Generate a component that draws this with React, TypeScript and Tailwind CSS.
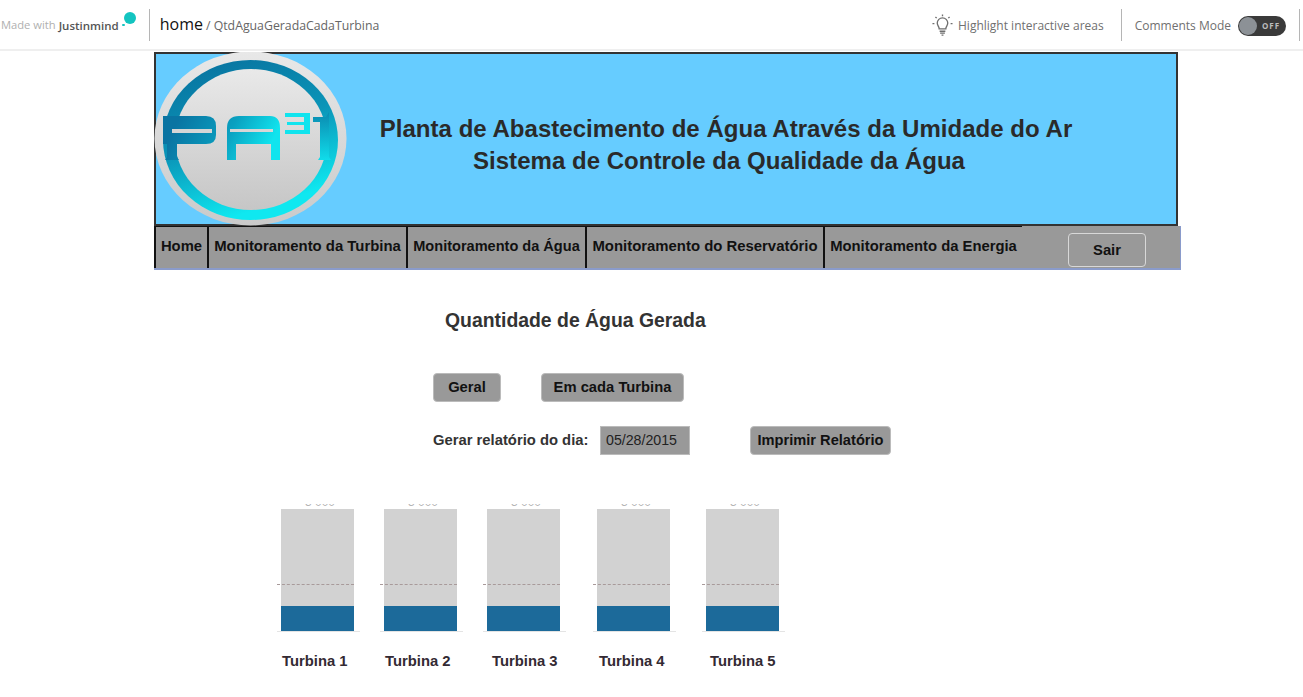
const menu = [
  { label: 'Home', box: 'w-[53px] text-[14.8px]' },
  { label: 'Monitoramento da Turbina', box: 'w-[199px] text-[14.9px]' },
  { label: 'Monitoramento da Água', box: 'w-[179px] text-[14.55px]' },
  { label: 'Monitoramento do Reservatório', box: 'w-[238px] text-[14.9px]' },
  { label: 'Monitoramento da Energia', box: 'w-[199px] text-[14.8px]' },
];

const turbines = [
  { label: 'Turbina 1', gap: 'ml-0', labelShift: 'ml-[1px]' },
  { label: 'Turbina 2', gap: 'ml-[30px]', labelShift: 'ml-[1px]' },
  { label: 'Turbina 3', gap: 'ml-[30px]', labelShift: 'ml-[5px]' },
  { label: 'Turbina 4', gap: 'ml-[37px]', labelShift: 'ml-[2px]' },
  { label: 'Turbina 5', gap: 'ml-[36px]', labelShift: 'ml-[4px]' },
];

function Logo() {
  return (
    <svg width="194" height="174" viewBox="154 52 194 174" className="shrink-0 -ml-[2px]">
      <defs>
        <linearGradient id="rim" x1="0" y1="0" x2="0" y2="1">
          <stop offset="0" stopColor="#e8e8e8" />
          <stop offset="1" stopColor="#cacaca" />
        </linearGradient>
        <linearGradient id="ring" x1="0" y1="0" x2="0.35" y2="1">
          <stop offset="0" stopColor="#086e9c" />
          <stop offset="0.55" stopColor="#0a95b8" />
          <stop offset="1" stopColor="#0fe8f0" />
        </linearGradient>
        <linearGradient id="disc" x1="0" y1="0" x2="0" y2="1">
          <stop offset="0" stopColor="#e9e9e9" />
          <stop offset="1" stopColor="#c6c6c6" />
        </linearGradient>
        <linearGradient id="letters" gradientUnits="userSpaceOnUse" x1="180" y1="116" x2="262" y2="160">
          <stop offset="0" stopColor="#0a74a2" />
          <stop offset="0.55" stopColor="#0aa0c0" />
          <stop offset="1" stopColor="#10e4ee" />
        </linearGradient>
        <linearGradient id="one" x1="0" y1="0" x2="0" y2="1">
          <stop offset="0" stopColor="#0a8ab0" />
          <stop offset="1" stopColor="#10dcea" />
        </linearGradient>
      </defs>
      <ellipse cx="250.5" cy="138.5" rx="96" ry="87" fill="url(#rim)" />
      <ellipse cx="250.5" cy="140" rx="87.5" ry="80" fill="url(#ring)" />
      <ellipse cx="251" cy="139.5" rx="76" ry="70.5" fill="url(#disc)" />
      <path d="M163 116H206Q216 116 216 126V135Q216 144 206 144H177V157L179 160H165L167 157V144H163Z" fill="url(#letters)" />
      <rect x="172" y="129" width="40" height="4" fill="#d6d6d6" />
      <path d="M227 160V128Q227 116 239 116H270Q280 116 280 128V160H271V144H236V160Z" fill="url(#letters)" />
      <rect x="230" y="129" width="43" height="3" fill="#d6d6d6" />
      <path d="M285 113H310V134H285V130H304V125H287V122H304V117H285Z" fill="url(#letters)" />
      <path d="M313 117H326L329 112V157L331 160H318L320 157V122H313Z" fill="url(#one)" />
    </svg>
  );
}

function BulbIcon() {
  return (
    <svg width="21" height="23" viewBox="0 0 22 24" fill="none" stroke="#6f6f6f" strokeWidth="1.4" className="mt-[2px] mr-[5px]">
      <path d="M7.5 15.5C7.5 13 5.5 12.3 5.5 9.5a5.5 5.5 0 0 1 11 0c0 2.8-2 3.5-2 6z" />
      <path d="M8 18h6M8.5 20h5M10 22h2" />
      <path d="M11 0.5v1.7M3.6 3l1.3 1.3M18.4 3l-1.3 1.3M0.5 10h2M19.5 10h2" />
    </svg>
  );
}

function TurbineChart() {
  return (
    <div className="relative w-[73px] h-[123px]">
      <div className="absolute -top-[5px] left-[24px] h-[5px] overflow-hidden text-[12px] leading-[12px] whitespace-nowrap text-[#b5b5b5]">
        <span className="relative -top-[8px]">3 000</span>
      </div>
      <div className="flex flex-col justify-end w-full h-full bg-[#d2d2d2]">
        <div className="h-[26px] bg-[#1c6a9a]" />
      </div>
      <div className="absolute top-[75px] -left-[4px] right-0 border-t border-dashed border-[#a89a9a]" />
      <div className="absolute bottom-0 -left-[4px] -right-[6px] h-px bg-[#e4e4e4]" />
    </div>
  );
}

export default function App() {
  return (
    <div className="min-h-[697px] bg-white overflow-hidden font-['Liberation_Sans',Arial,sans-serif]">
      <header className="h-[51px] flex items-center border-b-2 border-[#efefef] font-['Open_Sans',sans-serif]">
        <span className="ml-[1px] mt-[2px] text-[11.2px] text-[#b0b0b0]">Made with</span>
        <span className="ml-[3px] mt-[2px] text-[11.5px] font-semibold text-[#555]">Justinmind</span>
        <div className="relative w-[20px] h-[30px]">
          <span className="absolute top-[2px] left-[5px] w-[12px] h-[12px] rounded-full bg-[#13c4c0]" />
          <span className="absolute top-[14px] left-[3px] w-[3px] h-[2px] rounded-full bg-[#13c4c0]" />
        </div>
        <div className="ml-[10px] w-px h-[32px] bg-[#b5b5b5]" />
        <span className="ml-[10px] -mt-[2px] text-[16px] text-[#111]">home</span>
        <span className="ml-[3px] mt-[4px] text-[12.3px] text-[#666]">/ QtdAguaGeradaCadaTurbina</span>
        <div className="ml-auto flex items-center">
          <BulbIcon />
          <span className="mt-[2px] text-[12px] text-[#707070]">Highlight interactive areas</span>
          <div className="ml-[17px] w-px h-[32px] bg-[#b5b5b5]" />
          <span className="ml-[13px] mt-[2px] text-[12px] text-[#707070]">Comments Mode</span>
          <div className="ml-[7px] mt-[2px] flex items-center w-[48px] h-[20px] rounded-full bg-[#3a3a3a] pl-[1px]">
            <span className="w-[18px] h-[18px] rounded-full bg-[#8c9196]" />
            <span className="ml-[5px] text-[8px] font-bold tracking-[1px] text-[#bdbdbd]">OFF</span>
          </div>
          <div className="ml-[13px] mr-[3px] w-px h-[32px] bg-[#b5b5b5]" />
        </div>
      </header>

      <div className="ml-[154px] mt-[1px] w-[1027px]">
        <div className="w-[1024px] h-[174px] flex items-center border-2 border-[#333] bg-[#66ccff]">
          <Logo />
          <h1 className="w-[700px] ml-[28px] mt-[12px] whitespace-nowrap text-center text-[24px] tracking-[0.03px] leading-[32px] font-bold text-[#2a2a2a]">
            Planta de Abastecimento de Água Através da Umidade do Ar
            <span className="block pr-[14px]">Sistema de Controle da Qualidade da Água</span>
          </h1>
        </div>

        <nav className="h-[44px] flex items-stretch bg-[#999] border-b-2 border-r border-[#8a9bcb]">
          {menu.map((item) => (
            <div
              key={item.label}
              className={`${item.box} shrink-0 flex justify-center pt-[9px] border-l-2 border-t border-[#111] leading-[20px] font-bold text-[#111] whitespace-nowrap last:border-r`}
            >
              {item.label}
            </div>
          ))}
          <button className="ml-[46px] mt-[7px] w-[78px] h-[34px] rounded-[4px] border border-[#d8d8d8] text-[14.8px] font-bold text-[#111]">
            Sair
          </button>
        </nav>

        <div className="ml-[279px] pt-[40px]">
          <h2 className="ml-[12px] text-[19.4px] leading-[21px] font-bold text-[#333]">Quantidade de Água Gerada</h2>

          <div className="mt-[42px] flex">
            <button className="w-[68px] h-[29px] rounded-[4px] border border-[#bbb] bg-[#999] text-[14.75px] font-bold text-[#111]">
              Geral
            </button>
            <button className="ml-[40px] w-[143px] h-[29px] rounded-[4px] border border-[#bbb] bg-[#999] text-[14.75px] font-bold text-[#111]">
              Em cada Turbina
            </button>
          </div>

          <div className="mt-[24px] flex items-center">
            <span className="w-[167px] text-[14.8px] font-bold text-[#333]">Gerar relatório do dia:</span>
            <div className="w-[90px] h-[29px] flex items-center pl-[5px] bg-[#999] border border-[#bbb] text-[14.2px] text-[#222]">
              05/28/2015
            </div>
            <button className="ml-[60px] w-[141px] h-[29px] rounded-[4px] border border-[#bbb] bg-[#999] text-[14.65px] font-bold text-[#111]">
              Imprimir Relatório
            </button>
          </div>
        </div>

        <div className="ml-[127px] mt-[54px] flex">
          {turbines.map((t) => (
            <div key={t.label} className={t.gap}>
              <TurbineChart />
              <div className={`${t.labelShift} mt-[21px] text-[14.8px] leading-[17px] font-bold whitespace-nowrap text-[#332a33]`}>
                {t.label}
              </div>
            </div>
          ))}
        </div>
      </div>
    </div>
  );
}
